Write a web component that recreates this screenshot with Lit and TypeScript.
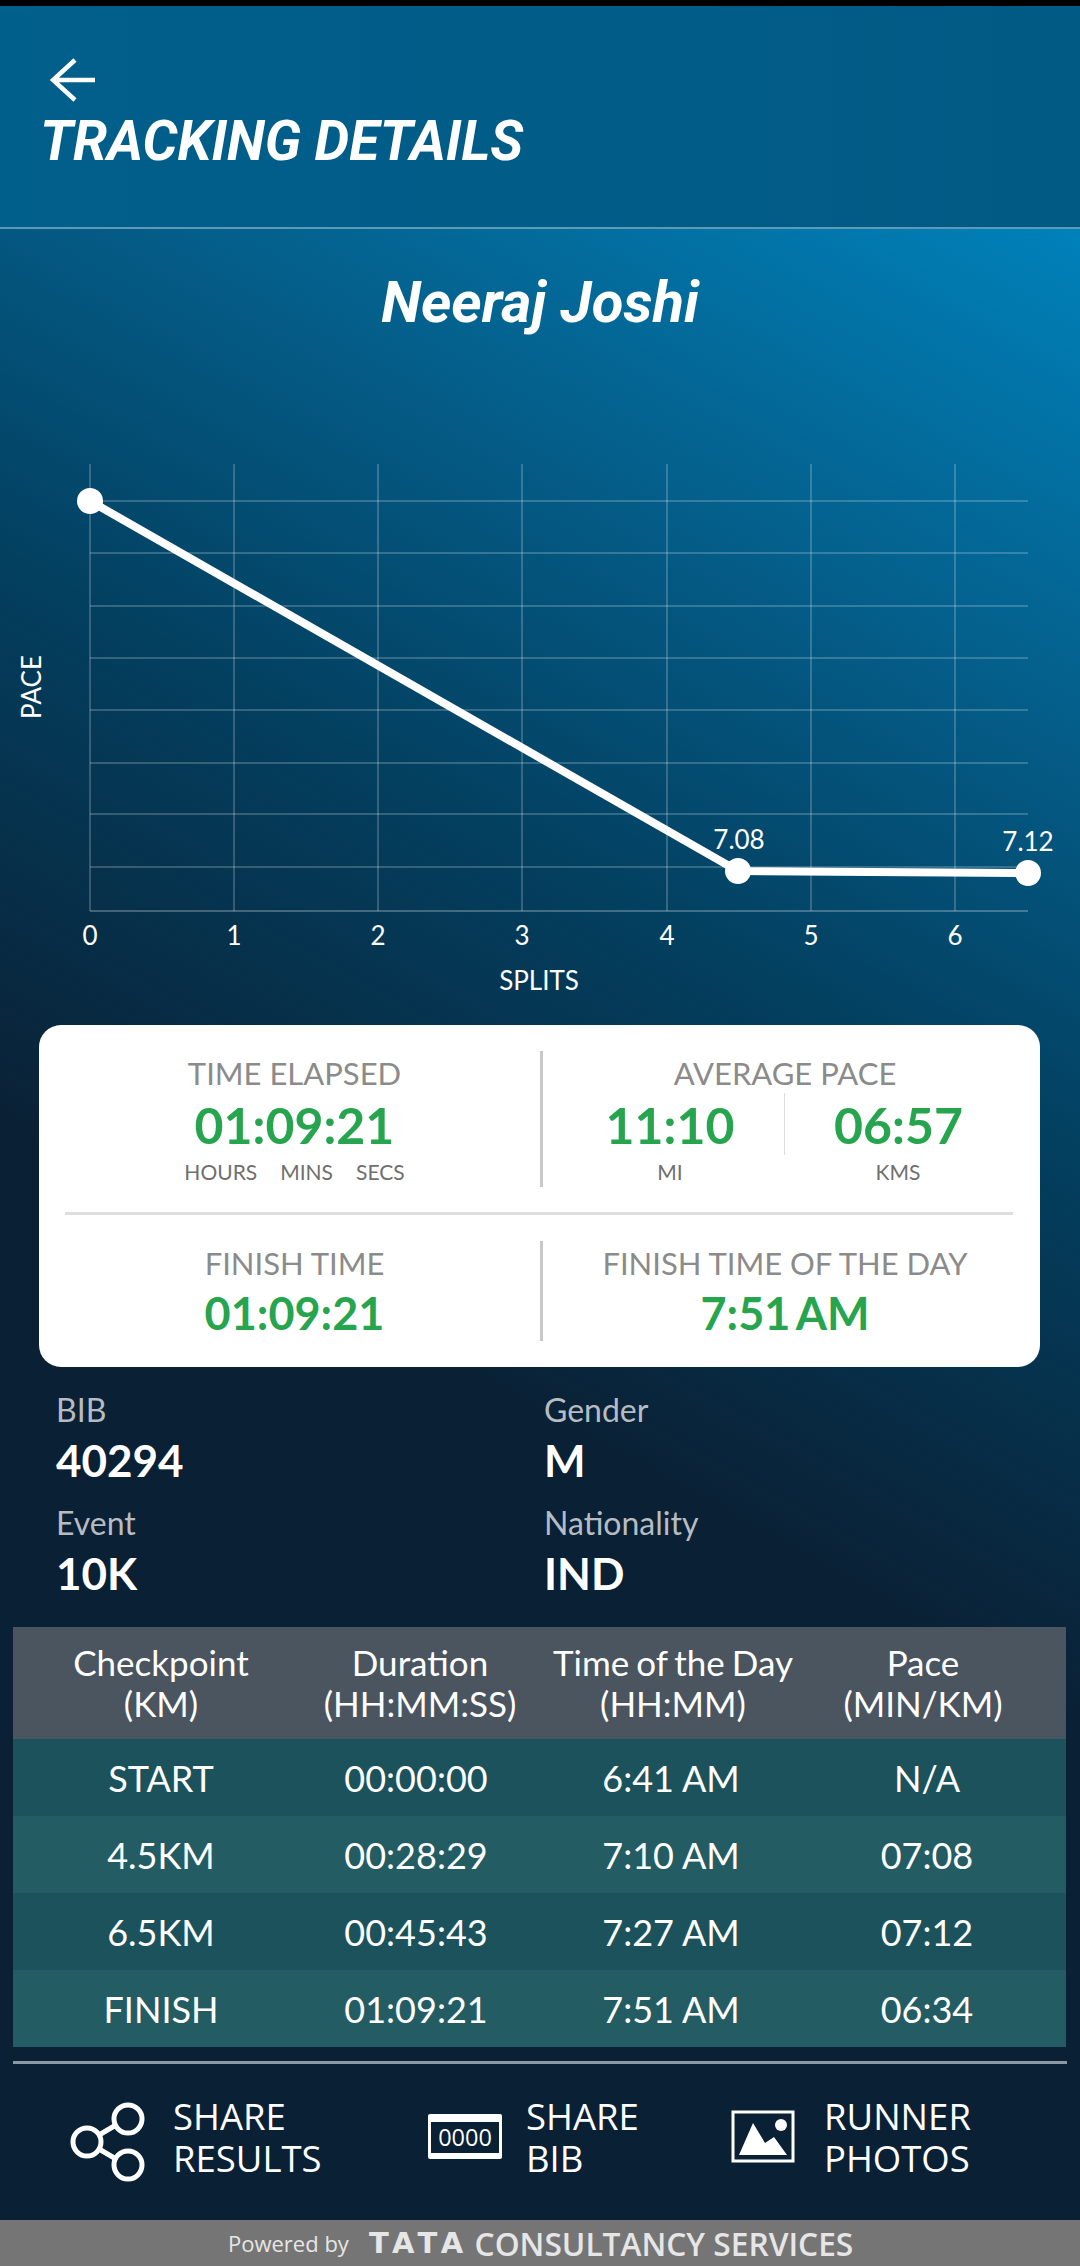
import { LitElement, html, css, svg } from 'lit';
import { customElement } from 'lit/decorators.js';

const GRID_X = [90, 234, 378, 522, 667, 811, 955];
const GRID_Y = [61, 113, 166, 218, 270, 323, 374, 427];
const POINTS = [
  [90, 61],
  [738, 431],
  [1028, 433],
];

const ROWS = [
  ['START', '00:00:00', '6:41 AM', 'N/A'],
  ['4.5KM', '00:28:29', '7:10 AM', '07:08'],
  ['6.5KM', '00:45:43', '7:27 AM', '07:12'],
  ['FINISH', '01:09:21', '7:51 AM', '06:34'],
];

@customElement('app-root')
export class AppRoot extends LitElement {
  static styles = css`
    :host {
      display: block;
      width: 1080px;
      height: 2266px;
      overflow: hidden;
      font-family: 'Lato', 'Open Sans', sans-serif;
      color: #fff;
    }

    .status {
      height: 6px;
      background: #000;
    }

    .header {
      box-sizing: border-box;
      height: 223px;
      padding: 48px 0 0 40px;
      background: linear-gradient(90deg, #015f8b, #015a84);
      border-bottom: 2px solid #5b9bb8;
    }

    .back {
      display: block;
      margin-left: 10px;
      width: 48px;
      height: 48px;
    }

    .title {
      margin-top: 9px;
      font: italic 700 55px/60px 'Roboto', sans-serif;
    }

    .main {
      height: 1991px;
      background: linear-gradient(209deg, #0081ba 0%, #04628f 17%, #033f5f 36%, #0a2034 58%, #0a2034 100%);
    }

    .name {
      padding-top: 38px;
      text-align: center;
      font: italic 700 58px/70px 'Roboto', sans-serif;
    }

    .chart {
      display: block;
      margin-top: 103px;
    }

    .chart text {
      fill: #fff;
      font-family: 'Lato', sans-serif;
      font-size: 26px;
      text-anchor: middle;
    }

    .card {
      box-sizing: border-box;
      margin: 15px 40px 0 39px;
      height: 342px;
      padding: 26px 13px 26px 10px;
      background: #fff;
      border-radius: 22px;
      text-align: center;
    }

    .card-row {
      display: grid;
      grid-template-columns: 491px 1fr;
    }

    .card-row.top {
      height: 135px;
    }

    .card-row.bottom {
      height: 100px;
    }

    .card-row > div + div {
      border-left: 3px solid #c8c8c8;
    }

    .card-rule {
      margin: 26px 14px 26px 16px;
      height: 3px;
      background: #dedede;
    }

    .label {
      padding-top: 2px;
      font-size: 31px;
      line-height: 40px;
      color: #8b8b8b;
    }

    .big {
      padding-top: 2px;
      font-size: 50px;
      font-weight: 700;
      line-height: 60px;
      color: #26a54e;
    }

    .medium {
      padding-top: 2px;
      font-size: 45px;
      font-weight: 700;
      line-height: 56px;
      word-spacing: -4px;
      color: #26a54e;
    }

    .units {
      display: flex;
      justify-content: center;
      gap: 23px;
      padding-top: 2px;
      font-size: 21px;
      line-height: 30px;
      color: #6f6f6f;
    }

    .pace {
      display: grid;
      grid-template-columns: 228px 228px;
      padding-left: 13px;
    }

    .pace .big + .big {
      border-left: 1px solid #dddddd;
    }

    .pace .unit {
      padding-top: 2px;
      font-size: 21px;
      line-height: 30px;
      color: #6f6f6f;
    }

    .info {
      display: grid;
      grid-template-columns: 488px 1fr;
      row-gap: 20px;
      padding: 25px 0 29px 56px;
    }

    .info-label {
      font-size: 32px;
      line-height: 36px;
      color: #b6bcc2;
    }

    .info-value {
      margin-top: 7px;
      font-size: 44px;
      font-weight: 700;
      line-height: 50px;
    }

    .table {
      margin: 0 14px 0 13px;
      text-align: center;
    }

    .table-row {
      display: grid;
      grid-template-columns: 296px 214px 296px 216px;
      align-items: center;
      height: 77px;
      font-size: 36px;
      background: #245c64;
    }

    .table-row:nth-child(even) {
      background: #1c525b;
    }

    .table-row.head {
      grid-template-columns: 296px 222px 284px 216px;
      height: 112px;
      font-size: 35px;
      line-height: 41px;
      word-spacing: -2px;
      background: #4a5560;
    }

    .actions-rule {
      margin: 14px 13px 0;
      height: 3px;
      background: #8a99a3;
    }

    .actions {
      box-sizing: border-box;
      display: grid;
      grid-template-columns: 359px 303px 1fr;
      height: 146px;
      padding-left: 69px;
      font-family: 'Open Sans', sans-serif;
      font-size: 36.5px;
      line-height: 42px;
    }

    .action {
      display: flex;
      align-items: center;
    }

    .action svg {
      flex: none;
    }

    .powered {
      display: flex;
      align-items: center;
      height: 46px;
      padding-left: 228px;
      background: #757575;
      color: #e6e6e6;
      font-family: 'Open Sans', sans-serif;
    }

    .powered .by {
      font-size: 22px;
    }

    .powered .tata {
      margin-left: 20px;
      font-family: 'DejaVu Sans', sans-serif;
      font-size: 29px;
      font-weight: 700;
      letter-spacing: 5.5px;
    }

    .powered .tcs {
      margin-left: 6px;
      font-size: 31.7px;
      font-weight: 600;
    }
  `;

  renderChart() {
    const line = POINTS.map((p) => p.join(',')).join(' ');
    return html`
      <svg class="chart" width="1080" height="570" viewBox="0 0 1080 570">
        ${GRID_X.map((x) => svg`<line x1=${x} x2=${x} y1="24" y2="471" stroke="#fff" stroke-opacity=".4" />`)}
        ${GRID_Y.map((y) => svg`<line x1="90" x2="1028" y1=${y} y2=${y} stroke="#fff" stroke-opacity=".4" />`)}
        <line x1="90" x2="1028" y1="471" y2="471" stroke="#fff" stroke-opacity=".5" />
        <polyline points=${line} fill="none" stroke="#fff" stroke-width="8" />
        ${POINTS.map(([x, y]) => svg`<circle cx=${x} cy=${y} r="13" fill="#fff" />`)}
        <text x="739" y="409">7.08</text>
        <text x="1028" y="411">7.12</text>
        ${GRID_X.map((x, i) => svg`<text x=${x} y="505">${i}</text>`)}
        <text x="539" y="550">SPLITS</text>
        <text transform="translate(41 247) rotate(-90)">PACE</text>
      </svg>
    `;
  }

  render() {
    return html`
      <div class="status"></div>
      <div class="header">
        <svg class="back" viewBox="0 0 48 48" fill="none" stroke="#fff" stroke-width="4.5">
          <path d="M45 26H3M25 6 3 26l22 20" />
        </svg>
        <div class="title">TRACKING DETAILS</div>
      </div>
      <div class="main">
        <div class="name">Neeraj Joshi</div>
        ${this.renderChart()}
        <div class="card">
          <div class="card-row top">
            <div>
              <div class="label">TIME ELAPSED</div>
              <div class="big">01:09:21</div>
              <div class="units"><span>HOURS</span><span>MINS</span><span>SECS</span></div>
            </div>
            <div>
              <div class="label">AVERAGE PACE</div>
              <div class="pace">
                <div class="big">11:10</div>
                <div class="big">06:57</div>
                <div class="unit">MI</div>
                <div class="unit">KMS</div>
              </div>
            </div>
          </div>
          <div class="card-rule"></div>
          <div class="card-row bottom">
            <div>
              <div class="label">FINISH TIME</div>
              <div class="medium">01:09:21</div>
            </div>
            <div>
              <div class="label">FINISH TIME OF THE DAY</div>
              <div class="medium">7:51 AM</div>
            </div>
          </div>
        </div>
        <div class="info">
          <div><div class="info-label">BIB</div><div class="info-value">40294</div></div>
          <div><div class="info-label">Gender</div><div class="info-value">M</div></div>
          <div><div class="info-label">Event</div><div class="info-value">10K</div></div>
          <div><div class="info-label">Nationality</div><div class="info-value">IND</div></div>
        </div>
        <div class="table">
          <div class="table-row head">
            <div>Checkpoint<br />(KM)</div>
            <div>Duration<br />(HH:MM:SS)</div>
            <div>Time of the Day<br />(HH:MM)</div>
            <div>Pace<br />(MIN/KM)</div>
          </div>
          ${ROWS.map((row) => html`
            <div class="table-row">${row.map((cell) => html`<div>${cell}</div>`)}</div>
          `)}
        </div>
        <div class="actions-rule"></div>
        <div class="actions">
          <div class="action">
            <svg width="104" height="90" viewBox="0 0 104 90" fill="none" stroke="#fff" stroke-width="5">
              <circle cx="59" cy="27" r="14" />
              <circle cx="18" cy="50" r="14" />
              <circle cx="59" cy="73" r="14" />
              <path d="M30 43 47 33M30 57 47 67" />
            </svg>
            <div>SHARE<br />RESULTS</div>
          </div>
          <div class="action">
            <svg width="98" height="46" viewBox="0 0 98 46">
              <rect width="74" height="45" rx="2" fill="#fff" />
              <rect x="3" y="8" width="68" height="31" fill="#0a2034" />
              <text x="37" y="32" fill="#fff" font-size="23.5" text-anchor="middle" font-family="Open Sans">0000</text>
            </svg>
            <div>SHARE<br />BIB</div>
          </div>
          <div class="action">
            <svg width="93" height="54" viewBox="0 0 93 54">
              <rect x="2" y="2" width="60" height="49" fill="none" stroke="#fff" stroke-width="3" />
              <circle cx="50" cy="15" r="6" fill="#fff" />
              <path d="M22 13 8 45h48L43 27l-9 6z" fill="#fff" />
            </svg>
            <div>RUNNER<br />PHOTOS</div>
          </div>
        </div>
      </div>
      <div class="powered">
        <span class="by">Powered by</span>
        <span class="tata">TATA</span>
        <span class="tcs">CONSULTANCY SERVICES</span>
      </div>
    `;
  }
}
